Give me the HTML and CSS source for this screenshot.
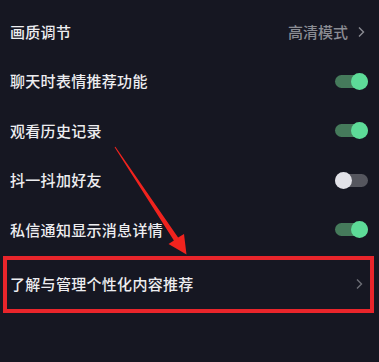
FILE: index.html
```html
<!DOCTYPE html>
<html lang="zh">
<head>
<meta charset="utf-8">
<link rel="stylesheet" href="styles.css">
</head>
<body>
<div class="page">
  <div class="list">
    <div class="row">
      <span class="label">画质调节</span>
      <span class="value">高清模式<svg class="chev" viewBox="0 0 8 12" width="8" height="12"><polyline points="2,1.5 6.5,6 2,10.5" fill="none" stroke="currentColor" stroke-width="1.4"/></svg></span>
    </div>
    <div class="row">
      <span class="label">聊天时表情推荐功能</span>
      <span class="toggle on"><span class="thumb"></span></span>
    </div>
    <div class="row">
      <span class="label">观看历史记录</span>
      <span class="toggle on"><span class="thumb"></span></span>
    </div>
    <div class="row">
      <span class="label">抖一抖加好友</span>
      <span class="toggle"><span class="thumb"></span></span>
    </div>
    <div class="row">
      <span class="label">私信通知显示消息详情</span>
      <span class="toggle on"><span class="thumb"></span></span>
    </div>
    <div class="row highlight">
      <span class="label">了解与管理个性化内容推荐</span>
      <svg class="chev dim" viewBox="0 0 8 12" width="8" height="12"><polyline points="2,1.5 6.5,6 2,10.5" fill="none" stroke="currentColor" stroke-width="1.4"/></svg>
    </div>
  </div>
  <svg class="arrow" viewBox="0 0 379 362" width="379" height="362">
    <polygon fill="#f0231e" points="114.6,147.3 115.4,146.7 178.1,237.6 184,234 186.5,254.5 168.5,244 173.9,240.4"/>
  </svg>
</div>
</body>
</html>
```
FILE: styles.css
```css
* { box-sizing: border-box; }
html, body { margin: 0; padding: 0; }
body {
  background: #161722;
  font-family: "Noto Sans CJK SC", "Noto Sans", sans-serif;
  color: #ededf0;
}
.page {
  position: relative;
  width: 379px;
  height: 362px;
  overflow: hidden;
}
.list {
  padding-top: 7px;
  display: flex;
  flex-direction: column;
}
.row {
  height: 49.5px;
  display: flex;
  align-items: center;
  justify-content: space-between;
  padding: 0 11px 0 10px;
}
.label {
  font-size: 15px;
  line-height: 20px;
  letter-spacing: 0.3px;
  font-weight: 500;
}
.value {
  display: flex;
  align-items: center;
  gap: 9px;
  font-size: 15px;
  font-weight: 500;
  color: #8b8c93;
  margin-right: 3px;
}
.chev { color: #8b8c93; display: block; }
.chev.dim { color: #6d6e76; margin-right: 3px; }
.toggle {
  position: relative;
  width: 33px;
  height: 13px;
  border-radius: 7px;
  background: #55565e;
  display: flex;
  align-items: center;
}
.toggle .thumb {
  width: 17px;
  height: 17px;
  border-radius: 50%;
  background: #e2e2e8;
}
.toggle.on { background: #457a5b; justify-content: flex-end; }
.toggle.on .thumb { background: #5ddb98; }
.highlight {
  margin: 1px 5px 0 3px;
  height: 57px;
  border: 4px solid #e9252b;
  padding: 0 4px 0 3px;
}
.arrow {
  position: absolute;
  left: 0;
  top: 0;
}
```
